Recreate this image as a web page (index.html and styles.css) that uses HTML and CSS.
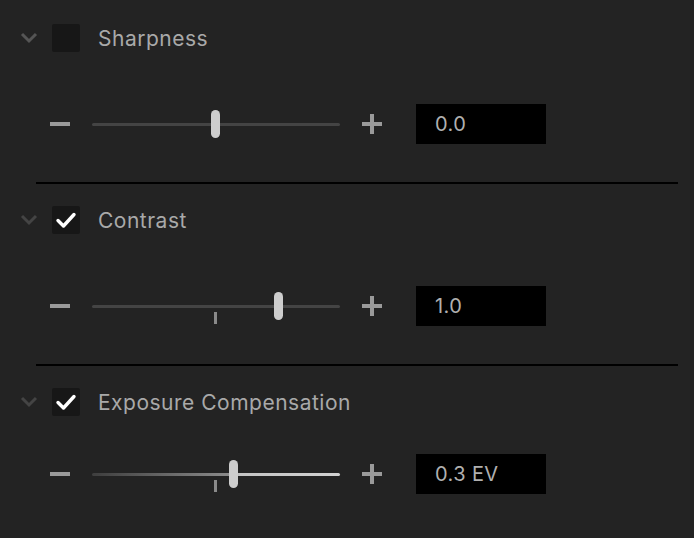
FILE: index.html
```html
<!DOCTYPE html>
<html>
<head>
    <title>Adjustments</title>
    <link rel="stylesheet" href="styles.css">
</head>
<body>
    <div class="panel">
        <div class="section">
            <div class="header">
                <svg class="chevron" width="18" height="12" viewBox="0 0 18 12"><path d="M2 2 L9 9 L16 2" fill="none" stroke="#555" stroke-width="3"/></svg>
                <span class="check"></span>
                <span class="label">Sharpness</span>
            </div>
            <div class="row">
                <span class="minus"></span>
                <div class="track">
                    <span class="thumb" style="left: 119px"></span>
                </div>
                <span class="plus"></span>
                <div class="value">0.0</div>
            </div>
        </div>
        <div class="divider"></div>
        <div class="section">
            <div class="header">
                <svg class="chevron" width="18" height="12" viewBox="0 0 18 12"><path d="M2 2 L9 9 L16 2" fill="none" stroke="#444" stroke-width="3"/></svg>
                <span class="check">
                    <svg width="28" height="28" viewBox="0 0 28 28"><path d="M6 14.5 L11.5 20 L22 8.5" fill="none" stroke="#fff" stroke-width="3.4" stroke-linecap="round" stroke-linejoin="round"/></svg>
                </span>
                <span class="label">Contrast</span>
            </div>
            <div class="row">
                <span class="minus"></span>
                <div class="track">
                    <span class="tick"></span>
                    <span class="thumb" style="left: 182px"></span>
                </div>
                <span class="plus"></span>
                <div class="value">1.0</div>
            </div>
        </div>
        <div class="divider"></div>
        <div class="section">
            <div class="header">
                <svg class="chevron" width="18" height="12" viewBox="0 0 18 12"><path d="M2 2 L9 9 L16 2" fill="none" stroke="#444" stroke-width="3"/></svg>
                <span class="check">
                    <svg width="28" height="28" viewBox="0 0 28 28"><path d="M6 14.5 L11.5 20 L22 8.5" fill="none" stroke="#fff" stroke-width="3.4" stroke-linecap="round" stroke-linejoin="round"/></svg>
                </span>
                <span class="label">Exposure Compensation</span>
            </div>
            <div class="row row-tight">
                <span class="minus"></span>
                <div class="track track-ev">
                    <span class="tick"></span>
                    <span class="thumb" style="left: 137px"></span>
                </div>
                <span class="plus"></span>
                <div class="value">0.3 EV</div>
            </div>
        </div>
    </div>
</body>
</html>
```

FILE: styles.css
```css
body {
    margin: 0;
    background-color: #232323;
    font-family: Inter, "Liberation Sans", sans-serif;
    color: #a9a9a9;
}

.panel {
    padding-top: 24px;
}

.header {
    display: flex;
    align-items: center;
    height: 28px;
}

.chevron {
    margin-left: 20px;
    display: block;
}

.check {
    width: 28px;
    height: 28px;
    margin-left: 14px;
    background-color: #171717;
    border-radius: 2px;
    display: block;
}

.check svg {
    display: block;
}

.label {
    margin-left: 18px;
    font-size: 21px;
    letter-spacing: 0.5px;
}

.row {
    display: flex;
    align-items: center;
    height: 40px;
    margin-top: 52px;
    padding-left: 50px;
}

.row-tight {
    margin-top: 38px;
}

.minus {
    width: 20px;
    height: 4px;
    background-color: #9a9a9a;
}

.track {
    position: relative;
    width: 248px;
    height: 3px;
    margin-left: 22px;
    background-color: #444;
    border-radius: 2px;
}

.track-ev {
    background: linear-gradient(to right, #3e3e3e 0px, #8a8a8a 136px, #c4c4c4 148px, #d2d2d2 248px);
}

.thumb {
    position: absolute;
    top: -13px;
    width: 9px;
    height: 28px;
    border-radius: 5px;
    background-color: #cdcdcd;
}

.tick {
    position: absolute;
    left: 122px;
    top: 7px;
    width: 3px;
    height: 12px;
    background-color: #8a8a8a;
}

.plus {
    position: relative;
    width: 20px;
    height: 20px;
    margin-left: 22px;
}

.plus::before,
.plus::after {
    content: "";
    position: absolute;
    background-color: #9a9a9a;
}

.plus::before {
    left: 0;
    top: 8px;
    width: 20px;
    height: 4px;
}

.plus::after {
    left: 8px;
    top: 0;
    width: 4px;
    height: 20px;
}

.value {
    box-sizing: border-box;
    width: 130px;
    height: 40px;
    margin-left: 34px;
    padding-left: 19px;
    background-color: #000;
    font-size: 20px;
    letter-spacing: 0.4px;
    line-height: 40px;
    color: #b0b0b0;
}

.divider {
    height: 2px;
    margin: 38px 16px 22px 36px;
    background-color: #000;
}
```
